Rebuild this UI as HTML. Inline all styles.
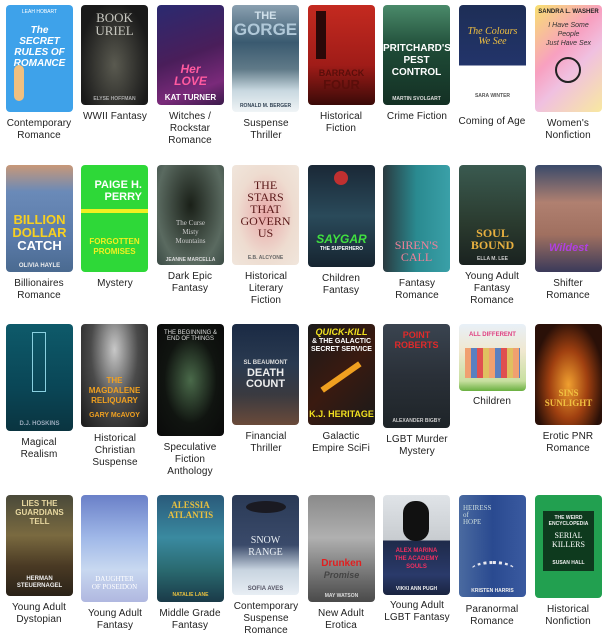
<!DOCTYPE html>
<html><head><meta charset="utf-8"><style>
*{margin:0;padding:0;box-sizing:border-box}
body{width:608px;height:642px;background:#fff;position:relative;overflow:hidden;font-family:"Liberation Sans",sans-serif}
.c{position:absolute;width:67px;border-radius:4px;overflow:hidden;text-align:center;color:#fff;font-weight:bold;line-height:1}
.l{position:absolute;width:76px;text-align:center;font-size:10px;line-height:12px;color:#222;letter-spacing:.1px}
.t{position:absolute;left:0;right:0;text-align:center}
</style></head><body>

<!-- Row 1 -->
<div class="c" style="left:6px;top:5px;height:107px;background:#3ea2ea">
 <div class="t" style="top:5px;font-size:5px;font-weight:normal">LEAH HOBART</div>
 <div class="t" style="top:20px;font-size:10px;font-style:italic;line-height:11px">The<br>SECRET<br>RULES OF<br>ROMANCE</div>
 <div style="position:absolute;left:8px;top:60px;width:10px;height:36px;background:#f0c080;border-radius:5px"></div>
</div>
<div class="l" style="left:1px;top:118px">Contemporary<br>Romance</div>

<div class="c" style="left:81px;top:5px;height:100px;background:radial-gradient(ellipse at 50% 60%,#5a5a50,#1a1a1a 75%)">
 <div class="t" style="top:6px;font-size:13px;color:#c8c8c0;font-family:'Liberation Serif',serif;font-weight:normal">BOOK<br>URIEL</div>
 <div class="t" style="bottom:3px;font-size:5px;color:#aaa">ELYSE HOFFMAN</div>
</div>
<div class="l" style="left:77px;top:111px">WWII Fantasy</div>

<div class="c" style="left:157px;top:5px;height:100px;background:linear-gradient(160deg,#2a2a70,#4a1e5a 50%,#7a2a7a 80%,#3a1a4a)">
 <div class="t" style="top:58px;font-size:12px;color:#ff5aa0;font-style:italic">Her<br>LOVE</div>
 <div class="t" style="bottom:3px;font-size:8px;color:#fff">KAT TURNER</div>
</div>
<div class="l" style="left:152px;top:111px">Witches /<br>Rockstar<br>Romance</div>

<div class="c" style="left:232px;top:5px;height:107px;background:linear-gradient(#8aa0b0,#3a5a70 35%,#607a88 60%,#c8d8e0 80%,#f0f4f6)">
 <div class="t" style="top:6px;font-size:11px;color:#d0e0ea">THE</div>
 <div class="t" style="top:16px;font-size:17px;color:#b0c8d8;font-family:'Liberation Sans Narrow',sans-serif">GORGE</div>
 <div class="t" style="bottom:3px;font-size:5px;color:#345">RONALD M. BERGER</div>
</div>
<div class="l" style="left:228px;top:118px">Suspense<br>Thriller</div>

<div class="c" style="left:308px;top:5px;height:100px;background:linear-gradient(#c42a20,#a01c18 60%,#3a0a08)">
 <div style="position:absolute;left:8px;top:6px;width:10px;height:48px;background:#2a0808"></div>
 <div class="t" style="top:64px;font-size:9px;color:#5a0e0a">BARRACK<br><span style="font-size:13px">FOUR</span></div>
</div>
<div class="l" style="left:303px;top:111px">Historical<br>Fiction</div>

<div class="c" style="left:383px;top:5px;height:100px;background:linear-gradient(#4a8a6a,#1e4a36 45%,#143024)">
 <div class="t" style="top:38px;font-size:10px;line-height:12px">PRITCHARD'S<br>PEST<br>CONTROL</div>
 <div class="t" style="bottom:3px;font-size:5px;color:#ddd">MARTIN SVOLGART</div>
</div>
<div class="l" style="left:379px;top:111px">Crime Fiction</div>

<div class="c" style="left:459px;top:5px;height:100px;background:linear-gradient(#1e2e56,#22346a 60%,#fff 61%)">
 <div class="t" style="top:22px;font-size:10px;color:#f0c040;font-style:italic;font-weight:normal;font-family:'Liberation Serif',serif">The Colours<br>We See</div>
 <div class="t" style="bottom:6px;font-size:5px;color:#555">SARA WINTER</div>
</div>
<div class="l" style="left:454px;top:116px">Coming of Age</div>

<div class="c" style="left:535px;top:5px;height:107px;background:linear-gradient(135deg,#f8e070,#f8a0c0 40%,#f0c0e0 60%,#f8e8a0)">
 <div class="t" style="top:4px;font-size:6px;color:#222">SANDRA L. WASHER</div>
 <div class="t" style="top:16px;font-size:7px;color:#333;font-style:italic;font-weight:normal;line-height:9px">I Have Some<br>People<br>Just Have Sex</div>
 <div style="position:absolute;left:20px;top:52px;width:26px;height:26px;border:2px solid #222;border-radius:50%"></div>
</div>
<div class="l" style="left:530px;top:118px">Women's<br>Nonfiction</div>

<!-- Row 2 -->
<div class="c" style="left:6px;top:165px;height:107px;background:linear-gradient(#c89878,#6a8ab8 25%,#5a7aa8 70%,#4a6a90)">
 <div class="t" style="top:48px;font-size:13px;color:#f8d020;line-height:13px">BILLION<br>DOLLAR</div>
 <div class="t" style="top:74px;font-size:13px;color:#fff">CATCH</div>
 <div class="t" style="bottom:3px;font-size:6px;color:#eee">OLIVIA HAYLE</div>
</div>
<div class="l" style="left:1px;top:278px">Billionaires<br>Romance</div>

<div class="c" style="left:81px;top:165px;height:107px;background:#2ed838">
 <div class="t" style="top:14px;font-size:11px;line-height:12px;text-align:right;right:6px">PAIGE H.<br>PERRY</div>
 <div style="position:absolute;left:0;right:0;top:44px;height:4px;background:#f0f020"></div>
 <div class="t" style="top:72px;font-size:8px;color:#f0f020;line-height:10px">FORGOTTEN<br>PROMISES</div>
</div>
<div class="l" style="left:77px;top:278px">Mystery</div>

<div class="c" style="left:157px;top:165px;height:100px;background:radial-gradient(ellipse at 50% 40%,#1a2018,#5a6a60 70%,#3a4a44)">
 <div class="t" style="top:54px;font-size:7px;color:#ccc;font-weight:normal;font-family:'Liberation Serif',serif;line-height:9px">The Curse<br>Misty<br>Mountains</div>
 <div class="t" style="bottom:2px;font-size:5px;color:#ddd">JEANNE MARCELLA</div>
</div>
<div class="l" style="left:152px;top:271px">Dark Epic<br>Fantasy</div>

<div class="c" style="left:232px;top:165px;height:100px;background:radial-gradient(ellipse at 50% 50%,#e8a8a8,#eedcd0 60%,#f0e6dc)">
 <div class="t" style="top:14px;font-size:12px;color:#5a1818;font-family:'Liberation Serif',serif;font-weight:normal;line-height:12px">THE<br>STARS<br>THAT<br>GOVERN<br>US</div>
 <div class="t" style="bottom:4px;font-size:5px;color:#666">E.B. ALCYONE</div>
</div>
<div class="l" style="left:228px;top:271px">Historical<br>Literary<br>Fiction</div>

<div class="c" style="left:308px;top:165px;height:102px;background:linear-gradient(#1a2836,#2a4a5a 50%,#162430)">
 <div style="position:absolute;left:26px;top:6px;width:14px;height:14px;background:#c03030;border-radius:50%"></div>
 <div class="t" style="top:68px;font-size:12px;color:#40e040;font-style:italic">SAYGAR</div>
 <div class="t" style="top:82px;font-size:5px;color:#fff">THE SUPERHERO</div>
</div>
<div class="l" style="left:303px;top:273px">Children<br>Fantasy</div>

<div class="c" style="left:383px;top:165px;height:107px;background:linear-gradient(90deg,#2a3a40,#2a8a90 50%,#3aa0a8)">
 <div class="t" style="top:74px;font-size:12px;color:#f08098;font-family:'Liberation Serif',serif;font-weight:normal;line-height:12px">SIREN'S<br>CALL</div>
</div>
<div class="l" style="left:379px;top:278px">Fantasy<br>Romance</div>

<div class="c" style="left:459px;top:165px;height:100px;background:linear-gradient(#3a5a50,#2a3a2e 60%,#1a2220)">
 <div class="t" style="top:62px;font-size:12px;color:#e8b040;font-family:'Liberation Serif',serif;line-height:12px">SOUL<br>BOUND</div>
 <div class="t" style="bottom:3px;font-size:5px;color:#ccc">ELLA M. LEE</div>
</div>
<div class="l" style="left:454px;top:271px">Young Adult<br>Fantasy<br>Romance</div>

<div class="c" style="left:535px;top:165px;height:107px;background:linear-gradient(#3a4a6a,#b08070 35%,#a07060 65%,#3a3a5a)">
 <div class="t" style="top:78px;font-size:11px;color:#b040e0;font-style:italic">Wildest</div>
</div>
<div class="l" style="left:530px;top:278px">Shifter<br>Romance</div>

<!-- Row 3 -->
<div class="c" style="left:6px;top:324px;height:107px;background:linear-gradient(#0e5a6a,#0a4656 60%,#0a3440)">
 <div style="position:absolute;left:26px;top:8px;width:14px;height:60px;border:1px solid #8ad0e0"></div>
 <div class="t" style="bottom:4px;font-size:6px;color:#9ab">D.J. HOSKINS</div>
</div>
<div class="l" style="left:1px;top:437px">Magical<br>Realism</div>

<div class="c" style="left:81px;top:324px;height:103px;background:radial-gradient(ellipse at 50% 25%,#c8c8c8,#4a4a4a 50%,#1a1a1a)">
 <div class="t" style="top:52px;font-size:8px;color:#f0a020;line-height:10px">THE<br>MAGDALENE<br>RELIQUARY</div>
 <div class="t" style="top:88px;font-size:7px;color:#f0a020">GARY McAVOY</div>
</div>
<div class="l" style="left:77px;top:433px">Historical<br>Christian<br>Suspense</div>

<div class="c" style="left:157px;top:324px;height:112px;background:radial-gradient(ellipse at 50% 50%,#4a6a4a,#101410 55%,#0a0a0a)">
 <div class="t" style="top:6px;font-size:6px;color:#ddd;font-weight:normal">THE BEGINNING &amp; END OF THINGS</div>
</div>
<div class="l" style="left:152px;top:442px">Speculative<br>Fiction<br>Anthology</div>

<div class="c" style="left:232px;top:324px;height:101px;background:linear-gradient(#1a2a44,#2a3a50 40%,#3a3a40 70%,#6a4a3a)">
 <div class="t" style="top:36px;font-size:6px;color:#ddd">SL BEAUMONT</div>
 <div class="t" style="top:44px;font-size:11px;color:#eee">DEATH COUNT</div>
</div>
<div class="l" style="left:228px;top:431px">Financial<br>Thriller</div>

<div class="c" style="left:308px;top:324px;height:101px;background:linear-gradient(135deg,#1a1a1a,#3a1a10 50%,#1a1a1a)">
 <div class="t" style="top:4px;font-size:9px;color:#f0e020;font-style:italic;line-height:9px">QUICK-KILL</div>
 <div class="t" style="top:14px;font-size:7px;color:#fff;line-height:8px">&amp; THE GALACTIC<br>SECRET SERVICE</div>
 <div style="position:absolute;left:10px;top:50px;width:46px;height:6px;background:#f0a020;transform:rotate(-35deg)"></div>
 <div class="t" style="bottom:6px;font-size:9px;color:#f0e020">K.J. HERITAGE</div>
</div>
<div class="l" style="left:303px;top:431px">Galactic<br>Empire SciFi</div>

<div class="c" style="left:383px;top:324px;height:104px;background:linear-gradient(#3a4450,#2a3038 50%,#1e2428)">
 <div class="t" style="top:6px;font-size:9px;color:#e02a2a;line-height:10px">POINT<br>ROBERTS</div>
 <div class="t" style="bottom:4px;font-size:5px;color:#ccc">ALEXANDER BIGBY</div>
</div>
<div class="l" style="left:379px;top:434px">LGBT Murder<br>Mystery</div>

<div class="c" style="left:459px;top:324px;height:67px;background:linear-gradient(#e8f0f8,#f0e8d0 40%,#c8e0a0 85%,#6ab040)">
 <div class="t" style="top:8px;font-size:6px;color:#e04080">ALL DIFFERENT</div>
 <div style="position:absolute;left:6px;top:24px;width:55px;height:30px;background:repeating-linear-gradient(90deg,#f0a070 0 6px,#5a80c0 6px 12px,#e05050 12px 18px,#e0c060 18px 24px)"></div>
</div>
<div class="l" style="left:454px;top:396px">Children</div>

<div class="c" style="left:535px;top:324px;height:101px;background:radial-gradient(ellipse at 50% 60%,#f0a030,#a04010 40%,#2a1008 75%)">
 <div class="t" style="top:64px;font-size:9px;color:#f0c040;font-family:'Liberation Serif',serif;line-height:10px">SINS<br>SUNLIGHT</div>
</div>
<div class="l" style="left:530px;top:431px">Erotic PNR<br>Romance</div>

<!-- Row 4 -->
<div class="c" style="left:6px;top:495px;height:101px;background:linear-gradient(#4a4a3a,#7a6a40 40%,#4a3a24 70%,#2a2218)">
 <div class="t" style="top:4px;font-size:8px;color:#e8d8a0;line-height:9px">LIES THE<br>GUARDIANS<br>TELL</div>
 <div class="t" style="bottom:6px;font-size:6px;color:#eee;line-height:7px">HERMAN<br>STEUERNAGEL</div>
</div>
<div class="l" style="left:1px;top:602px">Young Adult<br>Dystopian</div>

<div class="c" style="left:81px;top:495px;height:107px;background:linear-gradient(#6a80c8,#a0b8e8 40%,#c8d8f0 70%,#b0b8e0)">
 <div class="t" style="top:80px;font-size:7px;color:#fff;font-family:'Liberation Serif',serif;font-weight:normal;line-height:8px">DAUGHTER<br>OF POSEIDON</div>
</div>
<div class="l" style="left:77px;top:608px">Young Adult<br>Fantasy</div>

<div class="c" style="left:157px;top:495px;height:107px;background:linear-gradient(#2a5a7a,#3a8aa0 40%,#2a6a70 70%,#1a3a48)">
 <div class="t" style="top:5px;font-size:9px;color:#e8c040;font-family:'Liberation Serif',serif;line-height:10px">ALESSIA<br>ATLANTIS</div>
 <div class="t" style="bottom:4px;font-size:5px;color:#e8c040">NATALIE LANE</div>
</div>
<div class="l" style="left:152px;top:608px">Middle Grade<br>Fantasy</div>

<div class="c" style="left:232px;top:495px;height:100px;background:linear-gradient(#2a3a56,#3a4a6a 50%,#c8d4e0 75%,#e8eef4)">
 <div style="position:absolute;left:14px;top:6px;width:40px;height:12px;background:#1a1a22;border-radius:50%"></div>
 <div class="t" style="top:40px;font-size:10px;color:#e8eef4;font-family:'Liberation Serif',serif;font-weight:normal;line-height:12px">SNOW<br>RANGE</div>
 <div class="t" style="bottom:3px;font-size:6px;color:#556">SOFIA AVES</div>
</div>
<div class="l" style="left:228px;top:601px">Contemporary<br>Suspense<br>Romance</div>

<div class="c" style="left:308px;top:495px;height:107px;background:linear-gradient(#8a8a8a,#b0b0b0 40%,#6a6a6a 80%,#4a4a4a)">
 <div class="t" style="top:64px;font-size:10px;color:#e02020">Drunken</div>
 <div class="t" style="top:76px;font-size:9px;color:#444;font-style:italic">Promise</div>
 <div class="t" style="bottom:3px;font-size:5px;color:#ddd">MAY WATSON</div>
</div>
<div class="l" style="left:303px;top:608px">New Adult<br>Erotica</div>

<div class="c" style="left:383px;top:495px;height:100px;background:linear-gradient(#e0e4e8,#c8ccd0 45%,#1e2a4a 46%,#2a3a6a 80%,#1a2440)">
 <div style="position:absolute;left:20px;top:6px;width:26px;height:40px;background:#111;border-radius:12px"></div>
 <div class="t" style="top:52px;font-size:6px;color:#f03060;line-height:8px">ALEX MARINA<br>THE ACADEMY<br>SOULS</div>
 <div class="t" style="bottom:3px;font-size:5px;color:#eee">VIKKI ANN PUGH</div>
</div>
<div class="l" style="left:379px;top:600px">Young Adult<br>LGBT Fantasy</div>

<div class="c" style="left:459px;top:495px;height:102px;background:linear-gradient(90deg,#4a6aa0,#2a4a90 50%,#3a5aa0)">
 <div class="t" style="top:10px;font-size:7px;color:#cdd;font-family:'Liberation Serif',serif;font-weight:normal;text-align:left;left:4px">HEIRESS<br>of<br>HOPE</div>
 <div style="position:absolute;left:12px;top:66px;width:44px;height:18px;border-top:3px dotted #e8e8f0;border-radius:50% 50% 0 0"></div>
 <div class="t" style="bottom:3px;font-size:5px;color:#eee">KRISTEN HARRIS</div>
</div>
<div class="l" style="left:454px;top:604px">Paranormal<br>Romance</div>

<div class="c" style="left:535px;top:495px;height:103px;background:#22a050">
 <div style="position:absolute;left:8px;top:16px;width:51px;height:60px;background:#0e3a1e"></div>
 <div class="t" style="top:20px;font-size:5px;color:#eee;line-height:6px">THE WEIRD<br>ENCYCLOPEDIA</div>
 <div class="t" style="top:36px;font-size:8px;color:#fff;font-family:'Liberation Serif',serif;font-weight:normal;line-height:9px">SERIAL<br>KILLERS</div>
 <div class="t" style="top:66px;font-size:5px;color:#eee">SUSAN HALL</div>
</div>
<div class="l" style="left:530px;top:604px">Historical<br>Nonfiction</div>

</body></html>
